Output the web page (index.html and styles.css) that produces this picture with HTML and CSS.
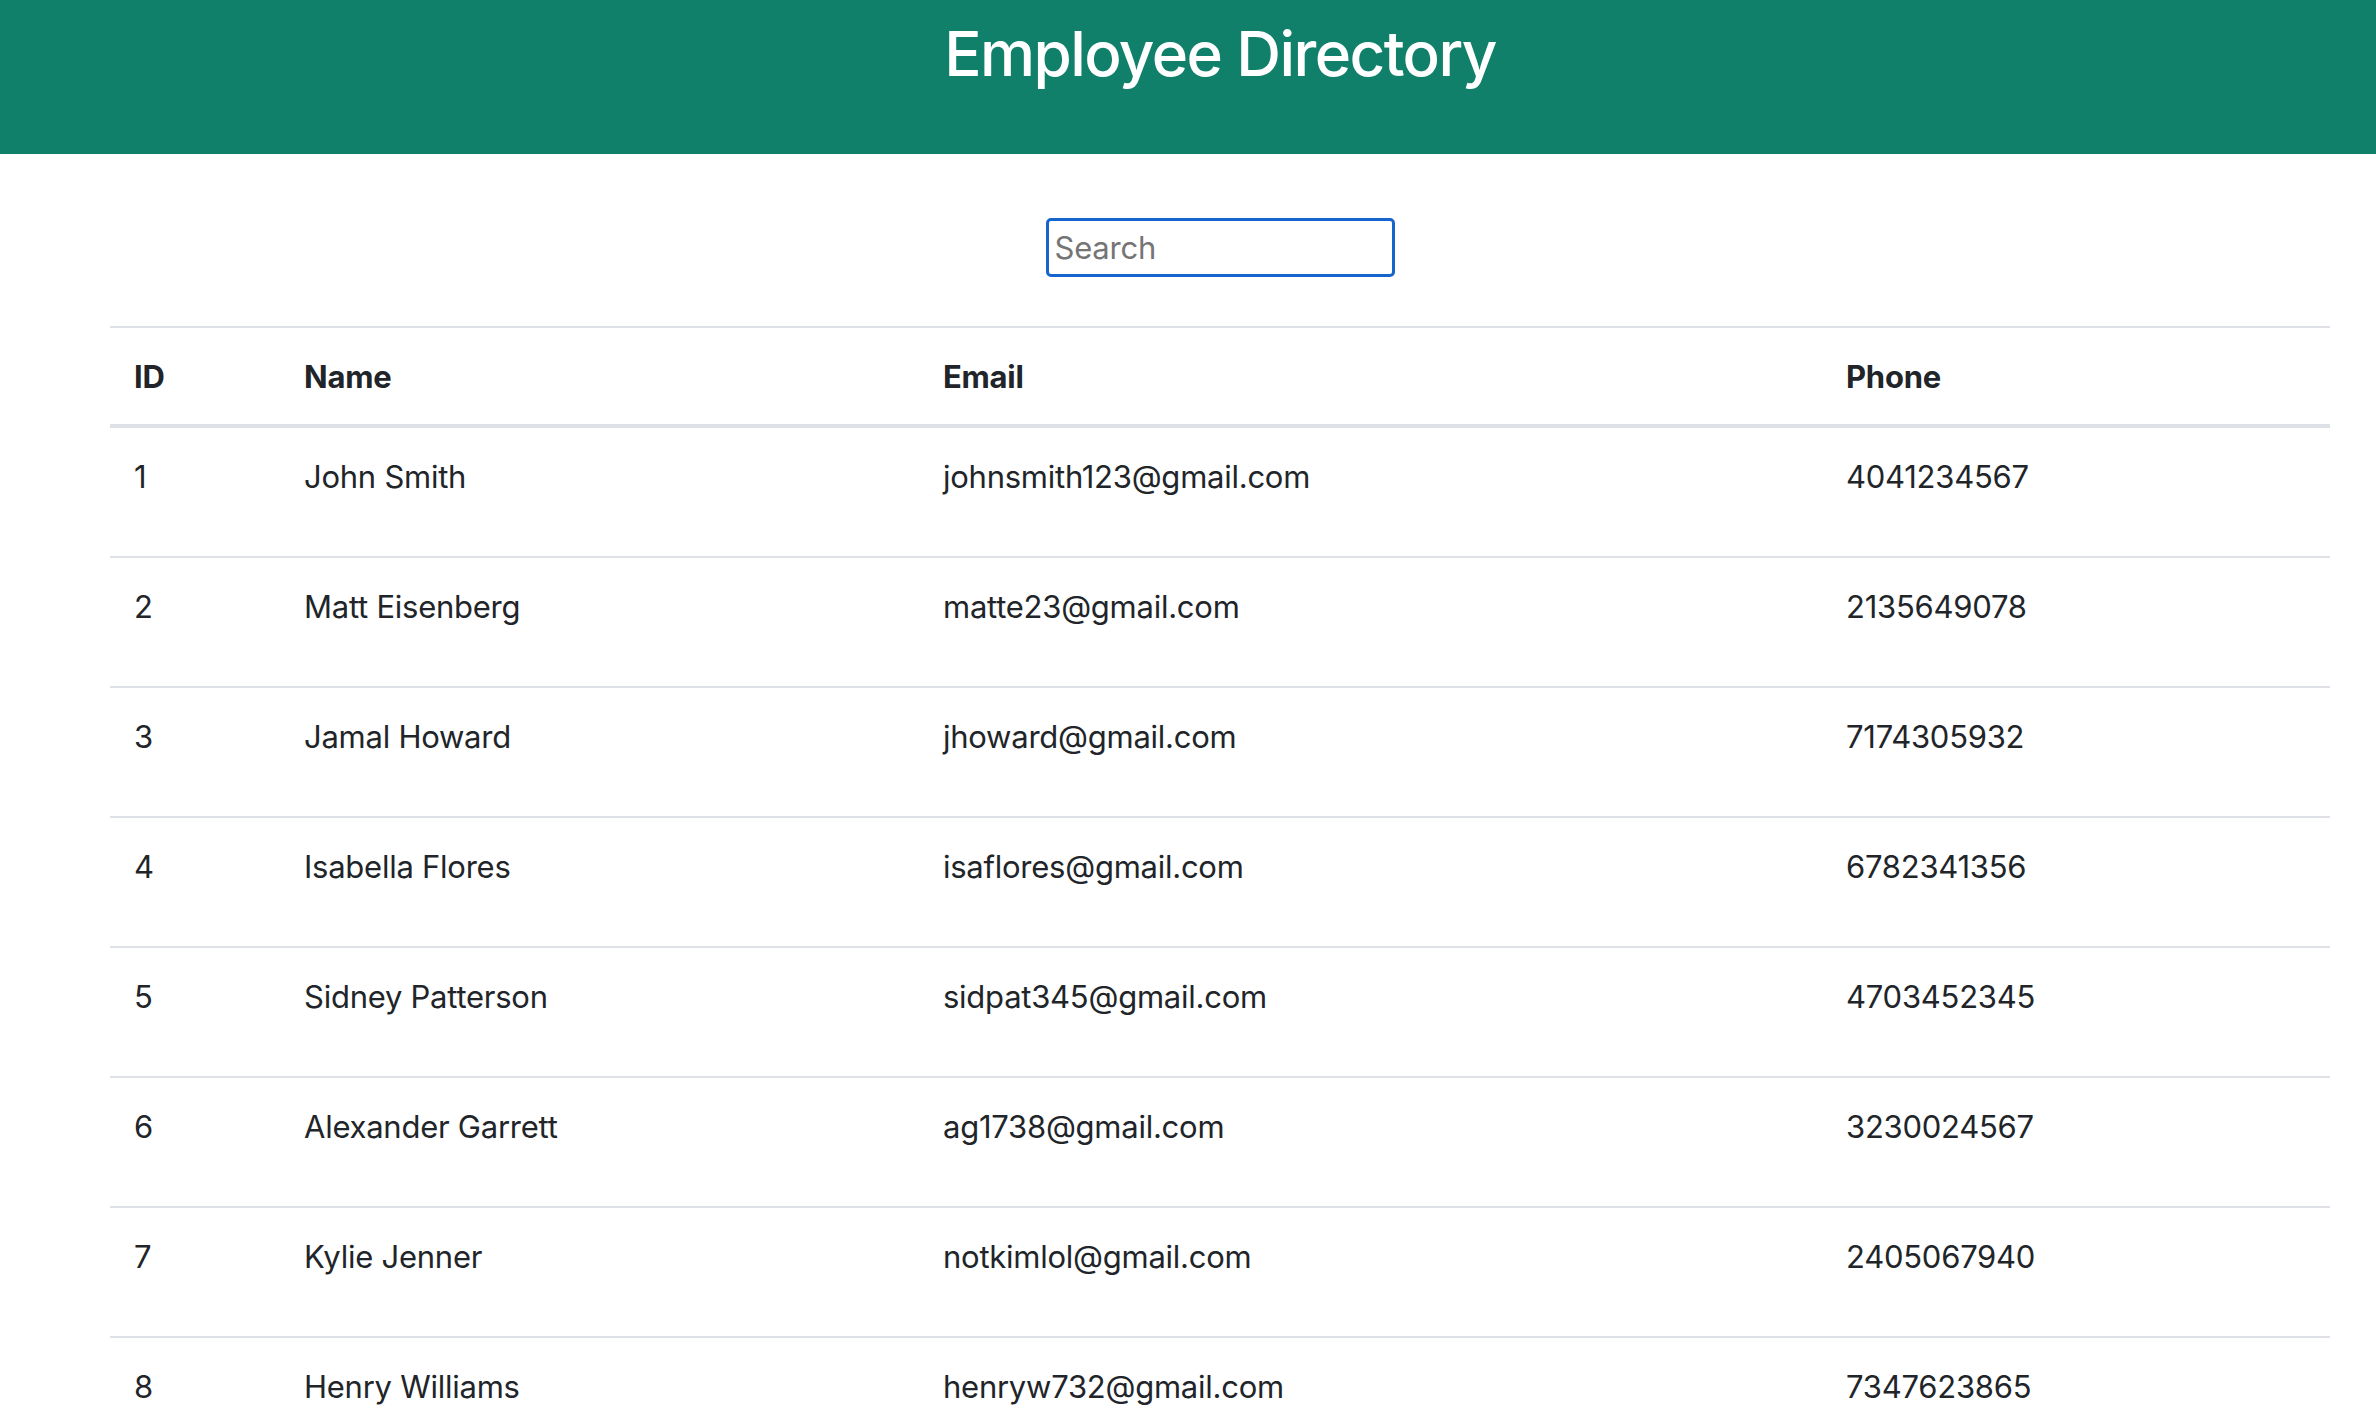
FILE: index.html
```html
<!DOCTYPE html>
<html lang="en">
<head>
<meta charset="utf-8">
<title>Employee Directory</title>
<link rel="stylesheet" href="styles.css">
</head>
<body>
<header class="banner">
  <h2 class="banner-title">Employee Directory</h2>
</header>
<main class="content">
  <div class="search-row">
    <input class="search-input" type="text" placeholder="Search">
  </div>
  <table class="directory">
    <colgroup>
      <col class="col-id">
      <col class="col-name">
      <col class="col-email">
      <col class="col-phone">
    </colgroup>
    <thead>
      <tr><th>ID</th><th>Name</th><th>Email</th><th>Phone</th></tr>
    </thead>
    <tbody>
      <tr><td>1</td><td>John Smith</td><td>johnsmith123@gmail.com</td><td>4041234567</td></tr>
      <tr><td>2</td><td>Matt Eisenberg</td><td>matte23@gmail.com</td><td>2135649078</td></tr>
      <tr><td>3</td><td>Jamal Howard</td><td>jhoward@gmail.com</td><td>7174305932</td></tr>
      <tr><td>4</td><td>Isabella Flores</td><td>isaflores@gmail.com</td><td>6782341356</td></tr>
      <tr><td>5</td><td>Sidney Patterson</td><td>sidpat345@gmail.com</td><td>4703452345</td></tr>
      <tr><td>6</td><td>Alexander Garrett</td><td>ag1738@gmail.com</td><td>3230024567</td></tr>
      <tr><td>7</td><td>Kylie Jenner</td><td>notkimlol@gmail.com</td><td>2405067940</td></tr>
      <tr><td>8</td><td>Henry Williams</td><td>henryw732@gmail.com</td><td>7347623865</td></tr>
    </tbody>
  </table>
</main>
</body>
</html>
```
FILE: styles.css
```css
html, body {
  margin: 0;
  padding: 0;
  overflow: hidden;
}
body {
  font-family: Inter, "Noto Sans", "Liberation Sans", sans-serif;
  color: #212529;
  background: #ffffff;
}
.banner {
  background: #11806a;
  height: 154px;
  box-sizing: border-box;
  padding: 15px 0 0 64px;
  text-align: center;
}
.banner-title {
  margin: 0;
  color: #ffffff;
  font-size: 62px;
  font-weight: 500;
  line-height: 77px;
  letter-spacing: -1.6px;
}
.content {
  padding: 0 46px 0 110px;
}
.search-row {
  display: flex;
  justify-content: center;
  padding: 64px 0 49px;
}
.search-input {
  box-sizing: border-box;
  width: 349px;
  height: 59px;
  border: 3px solid #1565cc;
  border-radius: 5px;
  padding: 0 6px;
  font-family: Inter, "Noto Sans", "Liberation Sans", sans-serif;
  font-size: 31px;
  letter-spacing: -0.2px;
  color: #212529;
  outline: none;
}
.search-input::placeholder {
  color: #757575;
}
.directory {
  width: 100%;
  border-collapse: collapse;
  font-size: 31px;
  line-height: 48px;
  letter-spacing: -0.25px;
}
.col-id { width: 170px; }
.col-name { width: 639px; }
.col-email { width: 903px; }
.col-phone { width: 508px; }
.directory th {
  text-align: left;
  font-weight: 700;
  padding: 25px 24px 23px;
  border-top: 2px solid #dee2e6;
  border-bottom: 4px solid #dee2e6;
}
.directory td {
  text-align: left;
  font-weight: 400;
  padding: 25px 24px 55px;
  border-bottom: 2px solid #dee2e6;
}
```
